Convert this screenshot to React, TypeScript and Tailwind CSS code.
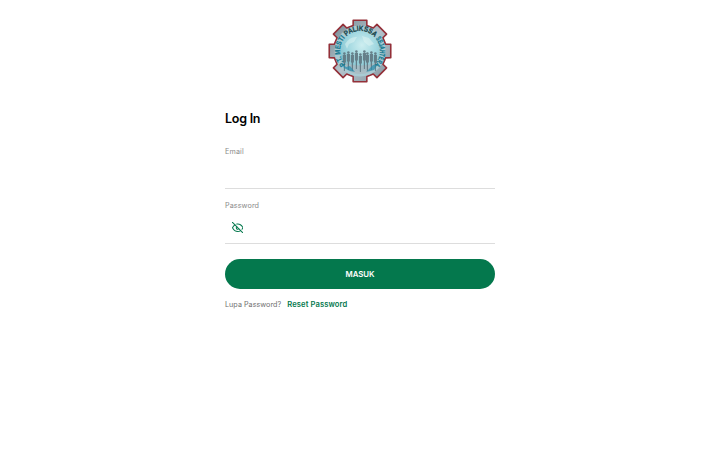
import { useState } from "react";

//icons
import { FiEyeOff } from "react-icons/fi";

// outline of the gear, eight teeth around the centre
const gearPoints = Array.from({ length: 8 })
  .flatMap((_, i) =>
    [
      [-15, 26.5],
      [-12.5, 31.5],
      [12.5, 31.5],
      [15, 26.5],
    ].map(([deg, r]) => {
      const angle = ((i * 45 + deg) * Math.PI) / 180;
      return `${(32 + r * Math.sin(angle)).toFixed(2)},${(32 - r * Math.cos(angle)).toFixed(2)}`;
    })
  )
  .join(" ");

const people = [
  [15, 36],
  [19, 35],
  [23, 36],
  [27, 34],
  [31, 37],
  [35, 34],
  [38, 36],
  [42, 35],
  [46, 36],
];

const Logo = () => (
  <svg viewBox="0 0 64 64" className="size-16">
    <defs>
      <linearGradient id="gear" x1="0" y1="0" x2="1" y2="1">
        <stop offset="0" stopColor="#71858f" />
        <stop offset="0.5" stopColor="#b3c3cb" />
        <stop offset="1" stopColor="#82939d" />
      </linearGradient>
      <radialGradient id="globe" cx="0.55" cy="0.35" r="0.7">
        <stop offset="0" stopColor="#cdeef0" />
        <stop offset="0.55" stopColor="#9ed6df" />
        <stop offset="1" stopColor="#7cb9c6" />
      </radialGradient>
      <path id="ring" d="M 17.9 46.1 A 20 20 0 1 1 46.1 46.1" />
    </defs>
    <polygon points={gearPoints} fill="url(#gear)" stroke="#933039" strokeWidth="1.6" strokeLinejoin="round" />
    <circle cx="32" cy="32" r="25.5" fill="#a9cbd3" />
    <circle cx="32" cy="32" r="20" fill="url(#globe)" />
    <path d="M17 25q5-8 12-7l-3 5-5 2-2 5zM34 17l7 2 5 6-5 2-5-4z" fill="#e2f5f3" opacity="0.5" />
    <path d="M14 43q18 7 36 0q-5 12-18 12t-18-12z" fill="#a9b9c0" opacity="0.8" />
    <g fill="#5f7680" opacity="0.9">
      {people.map(([x, y]) => (
        <g key={x}>
          <circle cx={x + 1.4} cy={y - 1.4} r="1.3" />
          <path d={`M${x - 0.2} ${y}h3.2l-.1 7-.8 1-.2 8h-1l-.2-8-.8-1z`} />
        </g>
      ))}
    </g>
    <path d="M14 44l4 4 4-1 5 6-5-1-6-3zM38 53l7-7 5-1-4 6z" fill="#258bac" opacity="0.7" />
    <g strokeWidth="0.25" className="font-['Liberation_Sans'] text-[7.4px] font-bold">
      <text fill="#14788f" stroke="#14788f">
        <textPath href="#ring" startOffset="1" textLength="29" lengthAdjust="spacingAndGlyphs">
          P.T. MESTI
        </textPath>
      </text>
      <text fill="#17454b" stroke="#17454b">
        <textPath href="#ring" startOffset="32" textLength="31" lengthAdjust="spacingAndGlyphs">
          PALIKSSA
        </textPath>
      </text>
      <text fill="#14788f" stroke="#14788f">
        <textPath href="#ring" startOffset="65" textLength="28" lengthAdjust="spacingAndGlyphs">
          SEJAHTERA
        </textPath>
      </text>
    </g>
  </svg>
);

const App = () => {
  const [showPassword, setShowPassword] = useState(false);

  return (
    <main className="flex h-screen flex-col items-center bg-white pt-[19px] font-['Inter',sans-serif]">
      <Logo />
      <form className="mt-[27px] flex w-[270px] flex-col" onSubmit={(e) => e.preventDefault()}>
        <h1 className="text-[12.5px] leading-[18px] font-semibold tracking-[-0.25px] text-black">Log In</h1>

        <label htmlFor="email" className="mt-[18px] text-[7.2px] leading-3 tracking-[0.15px] text-[#8a8a8a]">
          Email
        </label>
        <input id="email" type="email" className="h-[31px] border-b border-[#ddd] px-2 text-[8px] outline-none" />

        <label htmlFor="password" className="mt-[11px] text-[7.2px] leading-3 tracking-[0.1px] text-[#8a8a8a]">
          Password
        </label>
        <div className="flex h-8 items-center border-b border-[#ddd] pl-[6.5px]">
          <button type="button" onClick={() => setShowPassword(!showPassword)} className="text-[#04784d]">
            <FiEyeOff size={11.5} strokeWidth={2.1} />
          </button>
          <input
            id="password"
            type={showPassword ? "text" : "password"}
            className="min-w-0 flex-1 px-2 text-[8px] outline-none"
          />
        </div>

        <button className="mt-[14.5px] h-[30px] rounded-full bg-[#04784d] text-[7.8px] leading-3 font-semibold text-white">
          MASUK
        </button>
        <p className="mt-[10px] flex gap-[6px] text-[7.2px] leading-3">
          <span className="tracking-[0.03px] text-[#707070]">Lupa Password?</span>
          <a href="#" className="text-[7.6px] font-semibold tracking-[0.11px] text-[#04784d]">
            Reset Password
          </a>
        </p>
      </form>
    </main>
  );
};

export default App;
